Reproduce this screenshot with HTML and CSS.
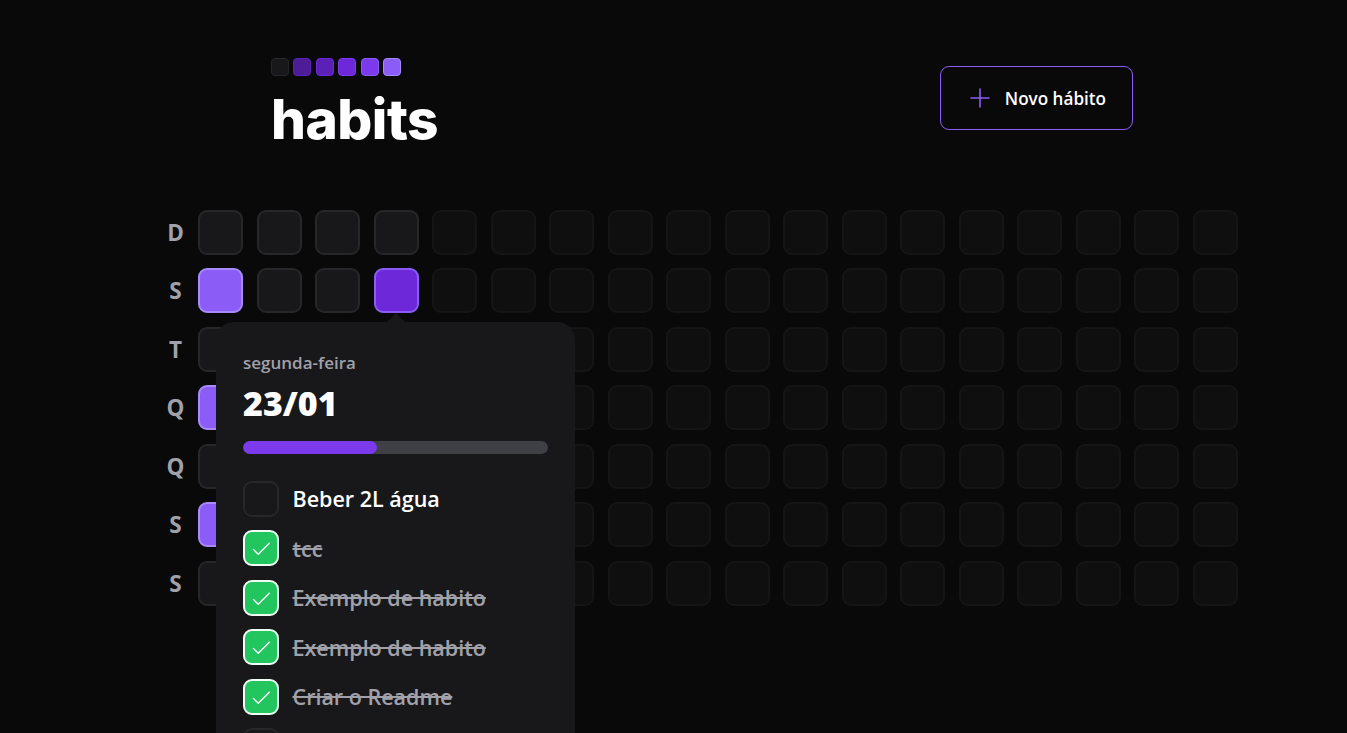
FILE: index.html
```html
<!DOCTYPE html>
<html lang="pt-BR">
<head>
<meta charset="utf-8">
<title>habits</title>
<link rel="stylesheet" href="styles.css">
</head>
<body>
<div class="page">
  <header class="header">
    <div class="logo">
      <div class="logo-squares">
        <span class="logo-sq s0"></span>
        <span class="logo-sq s1"></span>
        <span class="logo-sq s2"></span>
        <span class="logo-sq s3"></span>
        <span class="logo-sq s4"></span>
        <span class="logo-sq s5"></span>
      </div>
      <div class="logo-text">habits</div>
    </div>
    <button class="new-btn" type="button">
      <svg class="plus" width="22" height="22" viewBox="0 0 22 22" aria-hidden="true"><path d="M2 11H20M11 2V20" stroke="#8b5cf6" stroke-width="1.6" stroke-linecap="round" fill="none"/></svg>
      <span>Novo hábito</span>
    </button>
  </header>

  <section class="summary">
    <div class="weekdays">
      <div class="weekday">D</div>
      <div class="weekday">S</div>
      <div class="weekday">T</div>
      <div class="weekday">Q</div>
      <div class="weekday">Q</div>
      <div class="weekday">S</div>
      <div class="weekday">S</div>
    </div>
    <div class="days">
      <div class="day"></div><div class="day p5"></div><div class="day"></div><div class="day p5"></div><div class="day"></div><div class="day p5"></div><div class="day"></div>
      <div class="day"></div><div class="day"></div><div class="day"></div><div class="day"></div><div class="day"></div><div class="day"></div><div class="day"></div>
      <div class="day"></div><div class="day"></div><div class="day"></div><div class="day"></div><div class="day"></div><div class="day"></div><div class="day"></div>
      <div class="day"></div><div class="day p3"></div><div class="day future"></div><div class="day future"></div><div class="day future"></div><div class="day future"></div><div class="day future"></div>
      <div class="day future"></div><div class="day future"></div><div class="day future"></div><div class="day future"></div><div class="day future"></div><div class="day future"></div><div class="day future"></div>
      <div class="day future"></div><div class="day future"></div><div class="day future"></div><div class="day future"></div><div class="day future"></div><div class="day future"></div><div class="day future"></div>
      <div class="day future"></div><div class="day future"></div><div class="day future"></div><div class="day future"></div><div class="day future"></div><div class="day future"></div><div class="day future"></div>
      <div class="day future"></div><div class="day future"></div><div class="day future"></div><div class="day future"></div><div class="day future"></div><div class="day future"></div><div class="day future"></div>
      <div class="day future"></div><div class="day future"></div><div class="day future"></div><div class="day future"></div><div class="day future"></div><div class="day future"></div><div class="day future"></div>
      <div class="day future"></div><div class="day future"></div><div class="day future"></div><div class="day future"></div><div class="day future"></div><div class="day future"></div><div class="day future"></div>
      <div class="day future"></div><div class="day future"></div><div class="day future"></div><div class="day future"></div><div class="day future"></div><div class="day future"></div><div class="day future"></div>
      <div class="day future"></div><div class="day future"></div><div class="day future"></div><div class="day future"></div><div class="day future"></div><div class="day future"></div><div class="day future"></div>
      <div class="day future"></div><div class="day future"></div><div class="day future"></div><div class="day future"></div><div class="day future"></div><div class="day future"></div><div class="day future"></div>
      <div class="day future"></div><div class="day future"></div><div class="day future"></div><div class="day future"></div><div class="day future"></div><div class="day future"></div><div class="day future"></div>
      <div class="day future"></div><div class="day future"></div><div class="day future"></div><div class="day future"></div><div class="day future"></div><div class="day future"></div><div class="day future"></div>
      <div class="day future"></div><div class="day future"></div><div class="day future"></div><div class="day future"></div><div class="day future"></div><div class="day future"></div><div class="day future"></div>
      <div class="day future"></div><div class="day future"></div><div class="day future"></div><div class="day future"></div><div class="day future"></div><div class="day future"></div><div class="day future"></div>
      <div class="day future"></div><div class="day future"></div><div class="day future"></div><div class="day future"></div><div class="day future"></div><div class="day future"></div><div class="day future"></div>
    </div>
  </section>
</div>

<div class="popover">
  <svg class="arrow" width="18" height="9" viewBox="0 0 18 9" aria-hidden="true"><path d="M0 9L9 0L18 9Z" fill="#18181b"/></svg>
  <span class="pop-day">segunda-feira</span>
  <span class="pop-date">23/01</span>
  <div class="progress"><div class="progress-fill" style="width:44%"></div></div>
  <div class="habits">
    <div class="habit">
      <span class="cb"></span>
      <span class="habit-label">Beber 2L água</span>
    </div>
    <div class="habit checked">
      <span class="cb"><svg width="22" height="22" viewBox="0 0 256 256" aria-hidden="true"><polyline points="40,144 96,200 224,72" fill="none" stroke="#fff" stroke-width="16" stroke-linecap="round" stroke-linejoin="round"/></svg></span>
      <span class="habit-label">tcc</span>
    </div>
    <div class="habit checked">
      <span class="cb"><svg width="22" height="22" viewBox="0 0 256 256" aria-hidden="true"><polyline points="40,144 96,200 224,72" fill="none" stroke="#fff" stroke-width="16" stroke-linecap="round" stroke-linejoin="round"/></svg></span>
      <span class="habit-label">Exemplo de habito</span>
    </div>
    <div class="habit checked">
      <span class="cb"><svg width="22" height="22" viewBox="0 0 256 256" aria-hidden="true"><polyline points="40,144 96,200 224,72" fill="none" stroke="#fff" stroke-width="16" stroke-linecap="round" stroke-linejoin="round"/></svg></span>
      <span class="habit-label">Exemplo de habito</span>
    </div>
    <div class="habit checked">
      <span class="cb"><svg width="22" height="22" viewBox="0 0 256 256" aria-hidden="true"><polyline points="40,144 96,200 224,72" fill="none" stroke="#fff" stroke-width="16" stroke-linecap="round" stroke-linejoin="round"/></svg></span>
      <span class="habit-label">Criar o Readme</span>
    </div>
    <div class="habit">
      <span class="cb"></span>
    </div>
  </div>
</div>
</body>
</html>
```

FILE: styles.css
```css
* {
  box-sizing: border-box;
  margin: 0;
  padding: 0;
}

html, body {
  height: 100%;
}

body {
  background: #09090a;
  color: #ffffff;
  font-family: "Open Sans", "Noto Sans", sans-serif;
  overflow: hidden;
  position: relative;
}

.page {
  padding-top: 58px;
}

.header {
  display: flex;
  justify-content: space-between;
  align-items: flex-start;
  width: 862px;
  margin-left: 271px;
}

.logo {
  display: flex;
  flex-direction: column;
}

.logo-squares {
  display: flex;
  gap: 4.4px;
}

.logo-sq {
  width: 18px;
  height: 18px;
  border-radius: 4px;
  border: 1px solid;
}

.s0 { background: #18181b; border-color: #27272a; }
.s1 { background: #4c1d95; border-color: #5b21b6; }
.s2 { background: #5b21b6; border-color: #6d28d9; }
.s3 { background: #6d28d9; border-color: #7c3aed; }
.s4 { background: #7c3aed; border-color: #8b5cf6; }
.s5 { background: #8b5cf6; border-color: #a78bfa; }

.logo-text {
  font-family: "Inter", "Open Sans", sans-serif;
  font-weight: 800;
  font-size: 55px;
  line-height: 1;
  margin-top: 15.5px;
  letter-spacing: -0.5px;
}

.new-btn {
  margin-top: 8px;
  display: flex;
  align-items: center;
  gap: 14px;
  height: 64px;
  padding: 0 26px 0 28px;
  border: 1px solid #8b5cf6;
  border-radius: 9px;
  background: transparent;
  color: #ffffff;
  font-family: "Open Sans", "Noto Sans", sans-serif;
  font-weight: 600;
  font-size: 17.1px;
}

.summary {
  display: flex;
  margin-left: 153px;
  margin-top: 63px;
}

.weekdays {
  display: grid;
  grid-template-rows: repeat(7, 45px);
  row-gap: 13.5px;
  width: 45px;
}

.weekday {
  display: flex;
  align-items: center;
  justify-content: center;
  font-weight: 700;
  font-size: 22.5px;
  color: #a1a1aa;
}

.days {
  display: grid;
  grid-template-rows: repeat(7, 45px);
  grid-auto-flow: column;
  grid-auto-columns: 45px;
  gap: 13.5px;
}

.day {
  background: #18181b;
  border: 2px solid #27272a;
  border-radius: 9px;
}

.day.future { opacity: 0.4; }
.day.p5 { background: #8b5cf6; border-color: #a78bfa; }
.day.p3 { background: #6d28d9; border-color: #8b5cf6; }

.popover {
  position: absolute;
  left: 216px;
  top: 322px;
  width: 359px;
  padding: 27px;
  border-radius: 18px;
  background: #18181b;
  display: flex;
  flex-direction: column;
}

.arrow {
  position: absolute;
  top: -9px;
  left: 171px;
}

.pop-day {
  font-weight: 600;
  font-size: 17px;
  line-height: 27px;
  color: #a1a1aa;
}

.pop-date {
  margin-top: 6px;
  font-weight: 800;
  font-size: 34px;
  line-height: 1.25;
}

.progress {
  margin-top: 16px;
  height: 13px;
  border-radius: 12px;
  background: #3f3f46;
  overflow: hidden;
}

.progress-fill {
  height: 100%;
  border-radius: 12px;
  background: #7c3aed;
}

.habits {
  margin-top: 27px;
  display: flex;
  flex-direction: column;
  gap: 13.5px;
}

.habit {
  display: flex;
  align-items: center;
  gap: 13.5px;
}

.cb {
  width: 36px;
  height: 36px;
  flex: none;
  border-radius: 9px;
  border: 2px solid #27272a;
  background: #18181b;
  display: flex;
  align-items: center;
  justify-content: center;
}

.habit.checked .cb {
  background: #22c55e;
  border-color: #f0fdf4;
}

.habit-label {
  font-weight: 600;
  font-size: 21.5px;
  line-height: 1.5;
  padding-top: 2px;
  color: #ffffff;
}

.habit.checked .habit-label {
  text-decoration: line-through;
  color: #a1a1aa;
}
```
